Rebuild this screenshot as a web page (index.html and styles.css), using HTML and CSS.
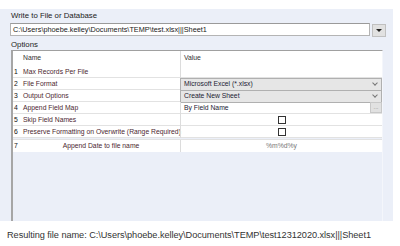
FILE: index.html
```html
<!DOCTYPE html>
<html lang="en">
<head>
  <meta charset="utf-8">
  <title>Write to File or Database</title>
  <link rel="stylesheet" href="styles.css">
</head>
<body>
  <div class="panel">
    <div class="label">Write to File or Database</div>
    <div class="path-row">
      <div class="path">C:\Users\phoebe.kelley\Documents\TEMP\test.xlsx|||Sheet1</div>
      <div class="drop-btn">
        <svg width="6" height="4" viewBox="0 0 6 4"><path d="M0 0h6L3 3z" fill="#222"/></svg>
      </div>
    </div>
    <div class="label options">Options</div>

    <!-- 設定表格 -->
    <div class="grid">
      <div class="row head">
        <span class="num"></span>
        <span class="name">Name</span>
        <span class="value">Value</span>
      </div>
      <div class="row">
        <span class="num">1</span>
        <span class="name">Max Records Per File</span>
        <span class="value"></span>
      </div>
      <div class="row">
        <span class="num">2</span>
        <span class="name">File Format</span>
        <span class="value select">Microsoft Excel (*.xlsx)<i class="chev"></i></span>
      </div>
      <div class="row">
        <span class="num">3</span>
        <span class="name">Output Options</span>
        <span class="value select">Create New Sheet<i class="chev"></i></span>
      </div>
      <div class="row">
        <span class="num">4</span>
        <span class="name">Append Field Map</span>
        <span class="value picker">By Field Name<b class="dots">...</b></span>
      </div>
      <div class="row">
        <span class="num">5</span>
        <span class="name">Skip Field Names</span>
        <span class="value check"><i class="box"></i></span>
      </div>
      <div class="row">
        <span class="num">6</span>
        <span class="name">Preserve Formatting on Overwrite (Range Required)</span>
        <span class="value check"><i class="box"></i></span>
      </div>
      <div class="row last">
        <span class="num">7</span>
        <span class="name center">Append Date to file name</span>
        <span class="value center muted">%m%d%y</span>
      </div>
    </div>
  </div>

  <p class="result">Resulting file name: C:\Users\phoebe.kelley\Documents\TEMP\test12312020.xlsx|||Sheet1</p>
</body>
</html>
```

FILE: styles.css
```css
body {
  margin: 0;
  background: #ffffff;
  font-family: "Liberation Sans", Arial, sans-serif;
  color: #1a1a1a;
}
.panel {
  margin-top: 9px;
  width: 393px;
  height: 212px;
  background-color: #ebeff8;
  display: flex;
  flex-direction: column;
  padding-left: 10px;
  box-sizing: border-box;
}
.label {
  font-size: 7.8px;
  height: 14px;
  line-height: 14px;
  padding-left: 1px;
  color: #222;
}
.options {
  height: 13px;
  line-height: 16px;
  margin-top: 1px;
}
.path-row {
  display: flex;
  gap: 2px;
  height: 13px;
}
.path {
  width: 360px;
  height: 13px;
  box-sizing: border-box;
  background: #fff;
  border: 1px solid #b4b4b4;
  border-top-color: #9a9a9a;
  font-size: 7.3px;
  line-height: 11px;
  padding-left: 2px;
  white-space: nowrap;
}
.drop-btn {
  width: 14px;
  height: 13px;
  margin-top: 1px;
  box-sizing: border-box;
  background: #e1e1e1;
  border: 1px solid #c0c0c0;
  display: flex;
  align-items: center;
  justify-content: center;
}
.grid {
  margin-left: 1px;
  width: 372px;
  flex: 1;
  border-left: 2px solid #a6a6a6;
  border-top: 1px solid #a0a0a0;
  border-right: 1px solid #f4f6fb;
  box-sizing: border-box;
  font-size: 6.8px;
}
.row {
  display: grid;
  grid-template-columns: 9px 158px 202px;
  height: 12px;
  line-height: 12px;
  background: #fff;
  border-bottom: 1px solid #e2e2e2;
  box-sizing: border-box;
}
.row.head {
  height: 15px;
  line-height: 14px;
  border-bottom: none;
}
.row.last {
  height: 13px;
  margin-top: 1px;
  border-top: 1px solid #e2e2e2;
  border-bottom: none;
}
.num {
  padding-left: 1px;
  color: #111;
}
.name {
  padding-left: 1px;
  color: #4d1f30;
  white-space: nowrap;
}
.value {
  border-left: 1px solid #dcdcdc;
  padding-left: 3px;
  color: #1c2233;
  position: relative;
  white-space: nowrap;
}
.head .name, .head .value {
  color: #333;
}
.center {
  text-align: center;
  padding-left: 0;
}
.muted {
  color: #777;
}
.select {
  background: #e6e6e6;
  border: 1px solid #b0b0b0;
  line-height: 10px;
  margin-bottom: -1px;
}
.chev {
  position: absolute;
  right: 4px;
  top: 2px;
  width: 3px;
  height: 3px;
  border-right: 1px solid #777;
  border-bottom: 1px solid #777;
  transform: rotate(45deg);
}
.dots {
  position: absolute;
  right: 0;
  top: 0;
  width: 12px;
  height: 11px;
  background: #e1e1e1;
  border: 1px solid #c8c8c8;
  box-sizing: border-box;
  font-weight: normal;
  font-size: 6px;
  line-height: 8px;
  text-align: center;
  color: #888;
}
.check {
  display: flex;
  align-items: center;
  justify-content: center;
  padding-left: 0;
}
.box {
  width: 8px;
  height: 8px;
  box-sizing: border-box;
  border: 1px solid #333;
  background: #fff;
}
.result {
  margin: 9px 0 0 7px;
  font-size: 9.2px;
  letter-spacing: -0.05px;
  color: #333;
  white-space: nowrap;
}
```
